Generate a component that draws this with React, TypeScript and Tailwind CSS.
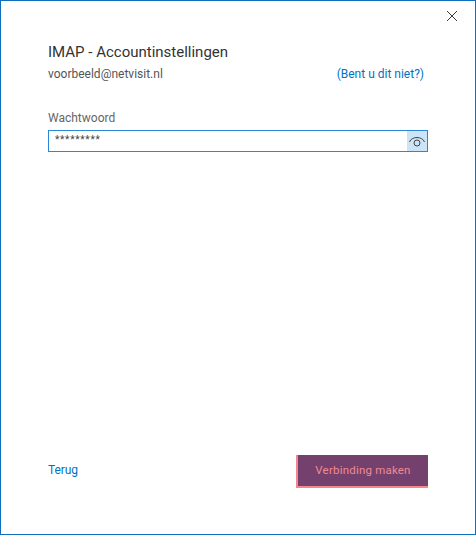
export default function App() {
  return (
    <div className="w-[476px] h-[535px] bg-white border border-[#106ebe] flex flex-col font-['Roboto',sans-serif] overflow-hidden">
      <div className="flex justify-end pt-[9px] pr-[17px] h-[42px] shrink-0">
        <svg width="12" height="12" viewBox="0 0 12 12">
          <path d="M1 1 L11 11 M11 1 L1 11" stroke="#3a3a3a" strokeWidth="1" fill="none" />
        </svg>
      </div>
      <div className="px-[47px] flex flex-col flex-1">
        <div className="text-[15px] leading-[18px] text-[#333333]">IMAP - Accountinstellingen</div>
        <div className="flex justify-between items-center mt-[4px] pr-[4px]">
          <span className="text-[12px] leading-[18px] text-[#555555]">voorbeeld@netvisit.nl</span>
          <a className="text-[12px] leading-[18px] text-[#0072c6]">(Bent u dit niet?)</a>
        </div>
        <label className="text-[12px] leading-[18px] text-[#666666] mt-[26px]">Wachtwoord</label>
        <div className="mt-[3px] h-[22px] flex items-stretch border border-[#2b88d8]">
          <input
            readOnly
            value="*********"
            className="flex-1 min-w-0 px-[6px] pb-[3px] text-[10px] leading-[18px] tracking-[0.75px] text-[#444444] outline-none bg-transparent"
          />
          <div className="w-[20px] bg-[#cce4f7] flex items-center justify-center">
            <svg width="18" height="14" viewBox="0 0 18 14" fill="none" stroke="#444444" strokeWidth="1">
              <path d="M1.5 8 C3.5 2 14.5 2 16.5 8" />
              <circle cx="9" cy="9" r="3" />
            </svg>
          </div>
        </div>
        <div className="flex-1" />
        <div className="flex justify-between items-center mb-[46px]">
          <a className="text-[12px] leading-[18px] tracking-[-0.1px] text-[#0072c6] mb-[4px]">Terug</a>
          <button
            type="button"
            className="w-[132px] h-[33px] bg-[#74406e] border-l-2 border-b-2 border-[#f4858d] text-[11.5px] tracking-[0.2px] text-[#f08a92]"
          >
            Verbinding maken
          </button>
        </div>
      </div>
    </div>
  );
}
